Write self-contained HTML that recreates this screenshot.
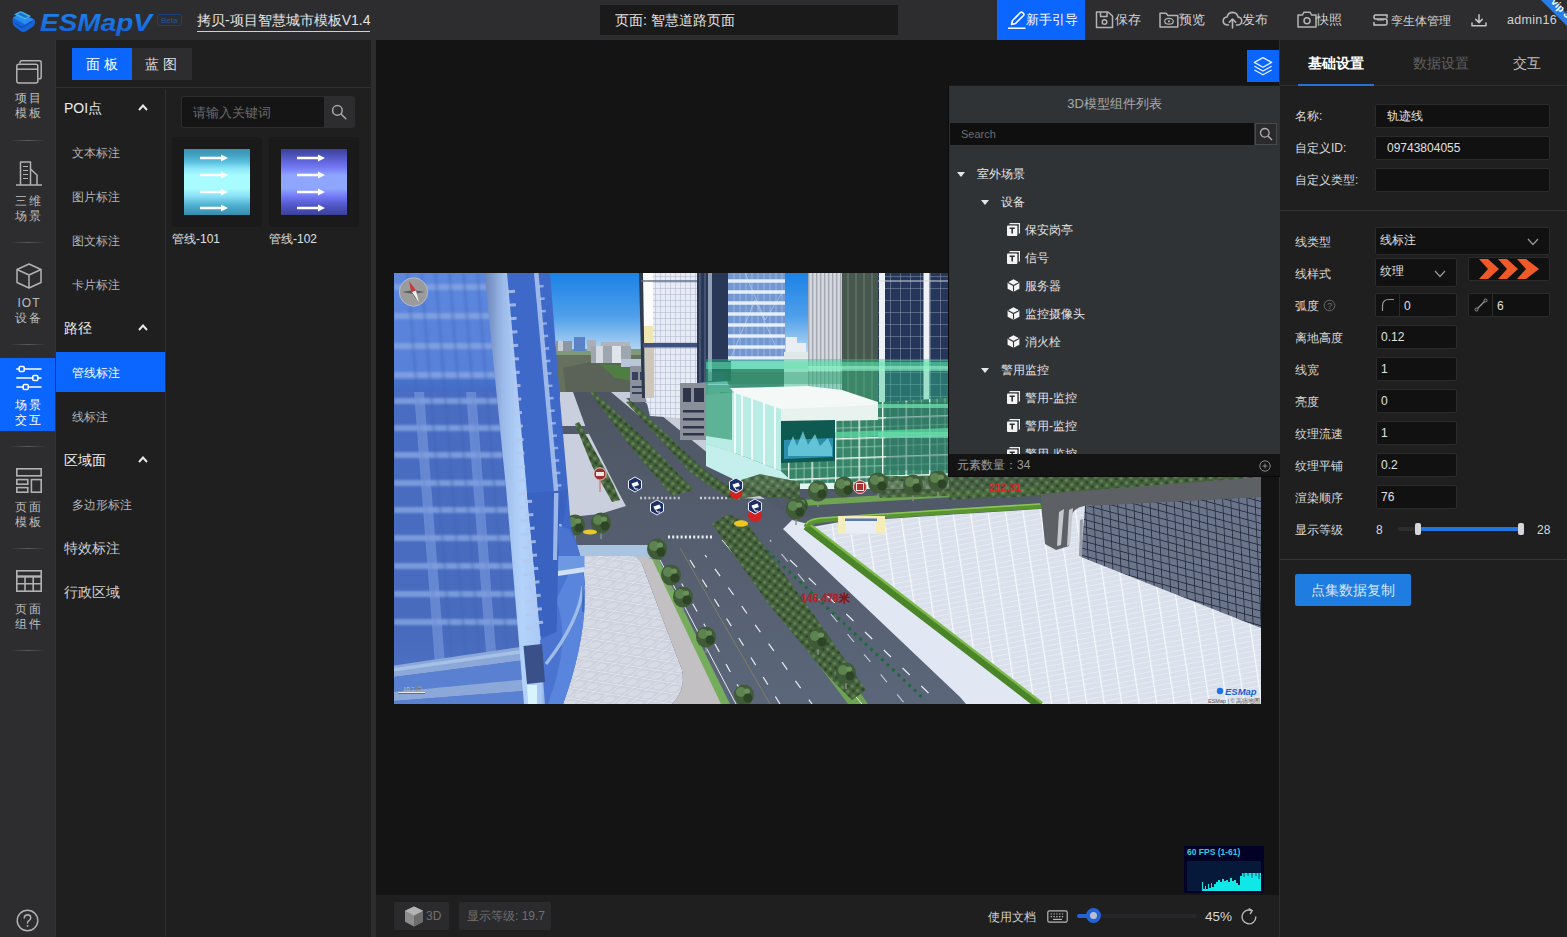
<!DOCTYPE html>
<html lang="zh">
<head>
<meta charset="utf-8">
<title>ESMapV</title>
<style>
*{box-sizing:border-box;margin:0;padding:0}
html,body{width:1567px;height:937px;overflow:hidden;background:#141414}
body{position:relative;font-family:"Liberation Sans",sans-serif;font-size:12px;color:#ccc;line-height:1}
.abs{position:absolute}
.t{position:absolute;white-space:nowrap;line-height:1}
svg{position:absolute;display:block;overflow:visible}
/* top bar */
#top{position:absolute;left:0;top:0;width:1567px;height:40px;background:#2d2d30}
#top .mi{position:absolute;top:14px;font-size:12.5px;color:#d2d2d2;white-space:nowrap}
/* left icon bar */
#ibar{position:absolute;left:0;top:40px;width:56px;height:897px;background:#2d2d30;border-right:1px solid #333}
#ibar .lb{position:absolute;left:0;width:56px;text-align:center;font-size:12px;color:#bdbdbd;letter-spacing:2px;padding-left:2px;line-height:15px}
#ibar .dv{position:absolute;left:10px;width:36px;height:1px;background:linear-gradient(90deg,rgba(90,90,90,0),#5a5a5a 50%,rgba(90,90,90,0))}
/* list panel */
#panel{position:absolute;left:56px;top:40px;width:315px;height:897px;background:#1f1f1f}
#split{position:absolute;left:371px;top:40px;width:5px;height:897px;background:#2d2d30}
.cat{position:absolute;left:8px;font-size:14px;color:#ececec}
.sub{position:absolute;left:16px;font-size:12px;color:#b4b4b4}
/* right panel */
#right{position:absolute;left:1279px;top:40px;width:288px;height:897px;background:#1f1f1f;border-left:1px solid #2e2e2e}
#right .l{position:absolute;left:15px;font-size:12px;color:#d8d8d8;white-space:nowrap}
#right .in{position:absolute;background:#111;border:1px solid #2b2b2b;border-radius:2px;color:#e0e0e0;font-size:12px;padding-left:4px;white-space:nowrap}
/* tree panel */
#tree{position:absolute;left:948px;top:85px;width:332px;height:392px;background:#303336;border-left:1px solid #0a0a0a;border-bottom:1px solid #0a0a0a;border-top:1px solid #1a1a1a;overflow:hidden}
#tree .r{position:absolute;font-size:12px;color:#e2e2e2;white-space:nowrap}
</style>
</head>
<body>

<!-- ================= CANVAS AREA ================= -->
<div id="canvas" class="abs" style="left:376px;top:40px;width:903px;height:897px;background:#141414"></div>
<svg id="scene" style="left:394px;top:273px;overflow:hidden" width="867" height="431" viewBox="394 273 867 431">
<defs>
  <linearGradient id="sky" x1="0" y1="273" x2="0" y2="352" gradientUnits="userSpaceOnUse">
    <stop offset="0" stop-color="#1b82e6"/><stop offset=".55" stop-color="#4f9fea"/><stop offset="1" stop-color="#b9d9f3"/>
  </linearGradient>
  <linearGradient id="bface" x1="0" y1="273" x2="0" y2="704" gradientUnits="userSpaceOnUse">
    <stop offset="0" stop-color="#5d88de"/><stop offset=".23" stop-color="#5881da"/><stop offset=".28" stop-color="#496dc2"/><stop offset=".85" stop-color="#486bbe"/><stop offset="1" stop-color="#5377c8"/>
  </linearGradient>
  <linearGradient id="bcol" x1="0" y1="0" x2="1" y2="0">
    <stop offset="0" stop-color="#6a84b8"/><stop offset=".3" stop-color="#9dbbea"/><stop offset=".6" stop-color="#b4d3fb"/><stop offset=".9" stop-color="#a9c8f4"/><stop offset="1" stop-color="#7f9fd8"/>
  </linearGradient>
  <linearGradient id="glass2" x1="0" y1="273" x2="0" y2="360" gradientUnits="userSpaceOnUse">
    <stop offset="0" stop-color="#4a7fc4"/><stop offset=".5" stop-color="#86b4e2"/><stop offset="1" stop-color="#a7c8ea"/>
  </linearGradient>
  <linearGradient id="road" x1="0" y1="392" x2="0" y2="704" gradientUnits="userSpaceOnUse"><stop offset="0" stop-color="#4d5562"/><stop offset=".4" stop-color="#545d6d"/><stop offset="1" stop-color="#5b667a"/></linearGradient>
  <pattern id="pgrid" width="17" height="5" patternUnits="userSpaceOnUse" patternTransform="matrix(1 -.2 .15 1 0 0)">
    <rect width="17" height="5" fill="#dbe1ec"/><path d="M0 0H17" stroke="#eef2f8" stroke-width="1.1"/><path d="M0 0V5" stroke="#f7f9fd" stroke-width="2.4"/>
  </pattern>
  <pattern id="pgridL" width="14" height="14" patternUnits="userSpaceOnUse" patternTransform="matrix(1 .16 .8 -.62 0 0)">
    <rect width="14" height="14" fill="#cdd2de"/><circle cx="7" cy="7" r="4.5" fill="#d6dbe6"/><path d="M0 0H14M0 0V14" stroke="#e6eaf2" stroke-width="1.3"/>
  </pattern>
  <pattern id="dtile" width="8.2" height="7.4" patternUnits="userSpaceOnUse" patternTransform="matrix(1 .27 .05 1 0 0)">
    <rect width="8.2" height="7.4" fill="#6a748a"/><path d="M0 0H8.2M0 0V7.4" stroke="#262c3c" stroke-width="1.7"/>
  </pattern>
  <pattern id="wgrid" width="5" height="6" patternUnits="userSpaceOnUse">
    <rect width="5" height="6" fill="#e6ebf5"/><path d="M0 0H5M0 0V6" stroke="#aab6cb" stroke-width="1"/>
  </pattern>
  <pattern id="ngrid" width="10" height="12" patternUnits="userSpaceOnUse">
    <rect width="10" height="12" fill="#26365a"/><path d="M0 0H10M0 0V12" stroke="#93a1b8" stroke-width=".9"/>
  </pattern>
  <pattern id="ggrid" width="23.5" height="19.5" patternUnits="userSpaceOnUse" patternTransform="matrix(1 -.035 0 1 788 401)">
    <rect width="23.5" height="19.5" fill="#388469"/><path d="M0 9.5H23.5M8 0V19.5M16 0V19.5" stroke="#9fd8c0" stroke-width=".7"/><path d="M0 0H23.5M0 0V19.5" stroke="#e9f7f1" stroke-width="2.8"/>
  </pattern>
  <pattern id="vstripe" width="4" height="4" patternUnits="userSpaceOnUse">
    <rect width="4" height="4" fill="#d3d6dc"/><rect width="1.4" height="4" fill="#a4a9b3"/>
  </pattern>
  <pattern id="trees" width="7" height="7" patternUnits="userSpaceOnUse" patternTransform="rotate(38)">
    <rect width="7" height="7" fill="#44603c"/><circle cx="2" cy="2" r="1.7" fill="#5f8652"/><circle cx="5.5" cy="5" r="1.5" fill="#2f4529"/>
  </pattern>
  <filter id="b1" x="-5%" y="-5%" width="110%" height="110%"><feGaussianBlur stdDeviation=".9"/></filter>
  <g id="tree"><rect x="-.7" y="-2" width="1.4" height="7" fill="#8a8f86"/><ellipse cx="0" cy="-11" rx="10" ry="10.5" fill="#405b38"/><ellipse cx="-3" cy="-14" rx="5" ry="5" fill="#5d8350"/><ellipse cx="4" cy="-8" rx="4.5" ry="4.5" fill="#2d4427"/><ellipse cx="3" cy="-15" rx="3" ry="2.6" fill="#6a9059"/></g>
  <g id="cam"><path d="M0 -8 L6.5 -4.3 V3.3 L0 7 L-6.5 3.3 V-4.3Z" fill="#1b2f66" stroke="#e9eefc" stroke-width="1"/><path d="M-3.5 -1.5 L2.5 -3.5 L4 0 L-2 2Z" fill="#fff"/><path d="M-1 2 L0 4 H3" stroke="#fff" stroke-width="1" fill="none"/></g>
</defs>

<!-- sky -->
<rect x="394" y="273" width="867" height="431" fill="url(#sky)"/>
<!-- far land -->
<rect x="548" y="349" width="100" height="48" fill="#66705f"/>
<rect x="548" y="349" width="100" height="6" fill="#7f9a7a"/>
<path d="M563 368 L600 360 L640 365 L640 392 L566 392Z" fill="#5b6358"/>
<path d="M600 364 L640 366 V382 L615 378Z" fill="#4f7d42"/>
<!-- distant buildings -->
<rect x="556" y="341" width="16" height="10" fill="#8e97a1"/><rect x="558" y="341" width="5" height="10" fill="#c6ccd3"/>
<rect x="574" y="337" width="11" height="14" fill="#5b82c4"/>
<rect x="587" y="340" width="9" height="11" fill="#a8afb8"/>
<rect x="601" y="342" width="29" height="7" fill="#aeb5be"/>
<rect x="591" y="346" width="40" height="17" fill="#9ea6b0"/><rect x="596" y="346" width="7" height="17" fill="#d5dae0"/><rect x="612" y="346" width="9" height="17" fill="#dfe4ea"/>
<rect x="621" y="359" width="20" height="8" fill="#b9c6d8"/>

<!-- ground base = road colour -->
<path d="M560 392 H1261 V704 H560Z" fill="url(#road)"/>
<!-- far pavements (upper right of avenue) -->
<path d="M611 392 H720 V440 L790 500 L740 498 L700 470 L650 425Z" fill="#c6ccd9"/>
<!-- service road -->
<path d="M626 398 L640 398 L736 476 L770 492 L735 492 L700 468Z" fill="#515a69"/>
<!-- left pavement beside blue tower -->
<path d="M560 392 L573 392 L586 428 L620 495 L626 506 L600 514 L560 518Z" fill="#c9cfdc"/>
<path d="M560 426 L586 426 L589 434 L560 434Z" fill="#515a69"/>
<!-- plaza top light band -->
<path d="M572 545 L648 545 L654 558 L578 558Z" fill="#a9c4e0"/>
<!-- left plaza -->
<path d="M576 556 L632 556 Q639 557 642 564 L682 670 Q686 690 672 704 L560 704 L560 560Z" fill="url(#pgridL)"/>
<!-- beige sidewalk -->
<path d="M636 556 L654 559 L722 704 L672 704 Q686 690 682 670 L642 564Z" fill="#c2c0c2"/>
<!-- grass strip -->
<path d="M652 559 L658 558 L730 704 L721 704Z" fill="#76ad5c"/>
<!-- median grass -->
<path d="M715 527 L741 523 L868 704 L848 704Z" fill="#6ea254"/>
<!-- right light sidewalk -->
<path d="M783 529 L792 520 L808 524 L1040 704 L966 704 L960 697Z" fill="#e1e8f3"/>
<!-- far side of cross street: pavement + grass -->
<path d="M720 470 L800 486 L949 478 L1261 470 V500 L1040 506 L840 519 L790 515 L760 496Z" fill="#515a69"/>
<path d="M800 500 L1040 486 L1040 492 L800 506Z" fill="#6fa552"/>
<!-- right plaza -->
<path d="M812 527 L840 522 L960 514 L1040 509 L1090 505 L1261 560 V704 H1040Z" fill="url(#pgrid)"/>
<!-- hedge -->
<path d="M806 526 L1040 706" stroke="#4a8629" stroke-width="8" fill="none"/>
<path d="M808 523 L1042 703" stroke="#7cb84a" stroke-width="2.5" fill="none"/>
<path d="M806 527 Q808 521 822 520 L960 511 L1040 506 L1078 503" stroke="#5a962f" stroke-width="5" fill="none"/>
<path d="M806 524 Q809 519 822 518 L960 509 L1040 504" stroke="#8cc458" stroke-width="1.6" fill="none"/>

<!-- road markings -->
<g stroke="#e8ebef" stroke-width="1.2" fill="none">
  <path d="M690 560 L780 704" stroke-dasharray="9 14"/>
  <path d="M705 555 L812 704" stroke-dasharray="9 14" stroke-dashoffset="6"/>
  <path d="M672 566 L748 704" stroke-dasharray="9 14" stroke-dashoffset="3"/>
  <path d="M722 540 L862 704" stroke-width="1"/>
  <path d="M660 560 L736 704" stroke-width="1"/>
  <path d="M790 560 L940 704" stroke-dasharray="10 16"/>
  <path d="M770 540 L905 704" stroke-dasharray="10 16" stroke-dashoffset="8" opacity=".7"/>
  <path d="M668 537 H712" stroke-width="3" stroke-dasharray="2 2.2"/>
  <path d="M700 498 H740" stroke-width="2.5" stroke-dasharray="2 2.2" opacity=".8"/>
  <path d="M640 498 H682" stroke-width="2.5" stroke-dasharray="2 2.2" opacity=".7"/>
</g>
<path d="M745 530 L925 700" stroke="#1e6b3a" stroke-width="3" stroke-dasharray="3 4.5" fill="none"/>
<path d="M680 548 L770 704" stroke="#8f8a55" stroke-width="1" fill="none" opacity=".7"/>

<!-- grey buildings + towers -->
<rect x="630" y="366" width="19" height="36" fill="#8c929d"/>
<g fill="#39415a"><rect x="632" y="372" width="6" height="8"/><rect x="640" y="372" width="6" height="8"/><rect x="632" y="386" width="14" height="2"/><rect x="632" y="392" width="14" height="2"/></g>
<!-- white tower 1 -->
<path d="M641 273 H697 V402 L680 418 L650 416 L645 395Z" fill="url(#wgrid)"/>
<path d="M643 273 H653 V326 H643Z" fill="#fcfcfc"/><path d="M643 326 H653 V344 H643Z" fill="#efe6b4"/><path d="M644 347 H654 V398 H645Z" fill="#cfc6ba"/>
<path d="M639 273 H643 L645 398 H642Z" fill="#2f3a4f"/>
<rect x="643" y="343" width="54" height="4.5" fill="#3f5180"/>
<rect x="641" y="280" width="56" height="2" fill="#5b6a86" opacity=".7"/>
<!-- dark tower 2 -->
<path d="M697 273 H731 V381 L697 383Z" fill="#2a3858"/><rect x="708" y="273" width="4" height="108" fill="#93a1b8"/>
<g stroke="#8f9db6" stroke-width=".7" opacity=".8"><path d="M700 273V382M705 273V382M710 273V381"/></g>
<rect x="728" y="273" width="57" height="88" fill="#7397d0"/><path d="M728 281H785M728 292H785M728 303H785M728 314H785M728 325H785M728 336H785M728 347H785M728 358H785" stroke="#e4edf9" stroke-width="3.4"/>
<g stroke="#eaf3fb" stroke-width=".8" opacity=".75" fill="none">
  
  <path d="M734 273V360M740 273V360M746 273V360M752 273V360M758 273V360M764 273V360M770 273V360M776 273V360M782 273V360" opacity=".55"/>
  <path d="M730 360 L755 300 L775 345 M745 273 L765 320 L784 290" opacity=".7"/>
</g>
<!-- grey building B -->
<rect x="680" y="383" width="28" height="57" fill="#8a8f9a"/>
<g fill="#2e354a"><rect x="683" y="388" width="8" height="14"/><rect x="694" y="388" width="10" height="14"/><rect x="683" y="410" width="21" height="2.5"/><rect x="683" y="418" width="21" height="2.5"/><rect x="683" y="426" width="21" height="2.5"/><rect x="683" y="433" width="21" height="2.5"/></g>
<!-- far white building in the gap -->
<path d="M786 337 H797 V343 H806 V392 H786Z" fill="#e9eef2"/>
<rect x="784" y="352" width="24" height="40" fill="#dfe9ea"/>
<!-- tower 3 -->
<rect x="808" y="273" width="35" height="120" fill="url(#vstripe)"/>
<rect x="842" y="273" width="37" height="131" fill="#46574d"/>
<path d="M848 273V400M856 273V400M864 273V402M872 273V403" stroke="#7b8a80" stroke-width=".8"/>
<rect x="878" y="273" width="71" height="204" fill="url(#ngrid)"/>
<path d="M882 273V477M926.5 273V477" stroke="#eef2f7" stroke-width="6"/>
<path d="M878 281H949" stroke="#cfd6e0" stroke-width="1.2"/>
<!-- green overlay -->
<path d="M706 359 H949 V487 L790 487 L706 456Z" fill="#2fc68c" opacity=".42"/>
<rect x="706" y="362" width="243" height="7" fill="#63e6ae" opacity=".5"/>
<rect x="706" y="372" width="140" height="12" fill="#2a8f68" opacity=".35"/><path d="M722 369 H784 V388 H730Z" fill="#267a58" opacity=".7"/>
<rect x="808" y="366" width="141" height="5" fill="#9af5cf" opacity=".55"/>
<!-- podium -->
<path d="M781 408 L949 398 V487 L781 471Z" fill="url(#ggrid)"/>
<path d="M886 402 H949 V477 H886Z" fill="#2b7263" opacity=".5"/>
<path d="M878 432 H949 V438 H878Z M878 404 H949 V408 H878Z" fill="#6fe3ae" opacity=".7"/>
<path d="M781 434 L949 428 V434 L781 440Z" fill="#5fe0a6" opacity=".7"/>
<path d="M706 395 L735 392 L781 408 V471 L735 453 L706 444Z" fill="#b9ece4"/>
<path d="M706 385 L732 385 L732 440 L706 436Z" fill="#47a582" opacity=".8"/>
<g stroke="#f3fbfa" stroke-width="2"><path d="M735 392V453M742 395V456M752 398V460M764 402V465M775 406V469"/></g>
<path d="M781 408 L878 404 V420 L781 422Z" fill="#e8f2ef"/>
<path d="M730 388 L808 386 L842 390 L878 402 V405 L781 409 L735 393Z" fill="#f4f9f8"/>
<path d="M781 421 L835 420 V461 L781 463Z" fill="#0e5a50"/>
<path d="M784 440 L833 438 V457 L784 459Z" fill="#2d8fae"/>
<path d="M788 448 L793 436 L797 446 L803 431 L808 445 L815 434 L820 446 L828 438 L832 448 V456 H788Z" fill="#6fd0e0" opacity=".8"/>
<!-- cyan ground in front of podium -->
<path d="M706 444 L735 453 L781 471 L800 487 L760 492 L706 466Z" fill="#c5efec"/>
<path d="M781 471 L949 470 V489 L800 489Z" fill="url(#ggrid)"/><path d="M781 484 L949 480 V489 H800Z" fill="#dff5f1"/>

<!-- avenue medians (trees) far part -->
<path d="M590 392 L594 392 L646 440 L694 490 L672 496 L630 446Z" fill="url(#trees)"/>
<path d="M626 402 L631 401 L700 466 L738 494 L728 498 L690 472Z" fill="url(#trees)"/>
<path d="M575 424 L579 422 L612 482 L620 500 L612 502 L592 466Z" fill="url(#trees)"/>
<!-- main median trees -->
<path d="M712 524 L728 514 L746 522 L812 612 L866 690 L852 700 L828 676 L770 606Z" fill="url(#trees)"/>
<!-- trees along cross street -->
<path d="M722 486 L760 474 L800 482 L800 500 L760 496 L730 500Z" fill="url(#trees)" opacity=".9"/>
<path d="M949 477 H1045 L1040 496 L949 500Z" fill="url(#trees)" opacity=".85"/>
<path d="M870 476 H949 V496 L880 498Z" fill="url(#trees)" opacity=".8"/>
<use href="#tree" x="575" y="536"/><use href="#tree" x="601" y="534"/><use href="#tree" x="657" y="560"/><use href="#tree" x="671" y="586"/><use href="#tree" x="683" y="608"/><use href="#tree" x="706" y="648"/><use href="#tree" x="744" y="706"/>
<use href="#tree" x="800" y="514" transform="translate(160 103) scale(.8)"/><use href="#tree" x="796" y="520"/><use href="#tree" x="818" y="502"/><use href="#tree" x="844" y="498"/><use href="#tree" x="878" y="494"/><use href="#tree" x="913" y="496"/><use href="#tree" x="938" y="492"/>
<use href="#tree" x="846" y="684"/><use href="#tree" x="818" y="650"/>
<!-- guard house -->
<rect x="838" y="516" width="47" height="18" fill="#f3edb9"/>
<rect x="846" y="520" width="30" height="13" fill="#e9eef6"/><rect x="845" y="518.5" width="32" height="2.5" fill="#5679b6"/>
<!-- cars -->
<ellipse cx="741" cy="523.5" rx="7" ry="3.2" fill="#f0c51d"/>
<ellipse cx="590" cy="532" rx="7" ry="2.6" fill="#e9c82a"/>
<!-- markers -->
<circle cx="600" cy="474" r="6.2" fill="#9b2f2f" stroke="#e8d5d5" stroke-width="1"/><rect x="596" y="472" width="8" height="4" fill="#f1e4e4"/><path d="M600 480V492" stroke="#c66" stroke-width="1"/>
<circle cx="860" cy="487" r="6.5" fill="#a83232" stroke="#e9caca" stroke-width="1"/><rect x="856.5" y="483.5" width="7" height="7" fill="none" stroke="#f4e6e6" stroke-width="1"/>
<path d="M729 492 Q736 505 743 492 Q736 499 729 492Z" fill="#e11919"/><circle cx="736" cy="493" r="6" fill="#e01b1b" opacity=".85"/>
<circle cx="755" cy="515" r="7" fill="#e01b1b" opacity=".9"/>
<use href="#cam" x="635" y="485"/><use href="#cam" x="657" y="508"/><use href="#cam" x="736" y="486"/><use href="#cam" x="755" y="507"/>
<!-- red labels -->
<text x="801" y="602" font-family="Liberation Sans" font-weight="bold" font-size="10.5" fill="#d8262c" stroke="#7a1a1a" stroke-width=".3">146.478米</text>
<text x="989" y="491" font-family="Liberation Sans" font-weight="bold" font-size="10.5" fill="#d8262c">212.31</text>

<!-- dark building right + canopy -->
<path d="M1036 476 H1261 V480 L1040 497Z" fill="url(#trees)"/>
<path d="M1085 506 L1261 497 V628 L1081 557Z" fill="url(#dtile)"/>
<path d="M1080 520 L1083 519 L1082 557 L1079 556Z" fill="#9a9ea8"/>
<path d="M1041 494 L1261 477 V497 L1084 506 Q1072 508 1070 520 L1069 546 L1056 550 L1045 544 L1041 504Z" fill="#5d6065"/>
<path d="M1059 512 L1064 509 L1061 545 L1057 546Z M1069 510 L1073 508 L1070 545 L1067 546Z" fill="#c5c8cc"/>

<!-- BLUE TOWER (left) -->
<path d="M394 273 H550 L560 400 L568 490 L571 528 Q585 560 584 600 Q582 650 563 704 H394Z" fill="#3f69c8"/>
<path d="M394 273 H486 L507 493 L527 704 H394Z" fill="url(#bface)"/>
<!-- light horizontal bands on main face -->
<g stroke="#86a6e2" stroke-width="6" opacity=".8" fill="none" filter="url(#b1)">
  <path d="M394 287H487M394 316H490M394 346H493M394 375H496M394 401H498M394 428H501M394 455H503M394 483H506M394 510H509M394 538H511M394 566H514M394 594H517M394 622H519"/>
</g>
<g stroke="#3f62b4" stroke-width="3" opacity=".35" fill="none" transform="skewX(4.5) translate(-22 0)" filter="url(#b1)">
  <path d="M408 273V704M422 273V704M436 273V704M450 273V704M464 273V704M478 273V704M492 340V704M506 480V704"/>
</g>
<path d="M414 392 H424 L448 704 H438Z M466 392 H476 L500 704 H490Z" fill="#7f9fe0" opacity=".55"/>
<path d="M394 380 H496 V392 H394Z" fill="#3d69c6" opacity=".5"/>
<!-- bottom lighter parapet -->
<path d="M394 665.5 L524 646.5 L526 660 L394 677Z" fill="#8ba8d8"/>
<path d="M394 668 L524.5 649.5 L525 653 L394 671.5Z" fill="#a6c1e8"/>
<path d="M394 677 L526 660 L528 679 L394 692Z" fill="#5a80d2"/>
<path d="M394 692 L528 679 L529 690.5 L394 701Z" fill="#8ba8d8"/>
<path d="M394 701 L529 690.5 L530 704 H394Z" fill="#5a80d2"/>
<!-- column -->
<path d="M484.5 273 H507 L527 493 L547 704 H524 L506.5 493Z" fill="url(#bcol)"/>
<!-- right face details -->
<path d="M534 273 H538.5 L558.5 493 L565 560 H560 L554 493Z" fill="#a6c0ec" opacity=".9"/>
<path d="M511 290 L531 640" stroke="#b4c8ee" stroke-width="8" stroke-dasharray="3 10.5" fill="none" opacity=".8"/>
<path d="M541 285 L562 520" stroke="#b4c8ee" stroke-width="5" stroke-dasharray="2.5 10" fill="none" opacity=".7"/>
<!-- podium curve pieces -->
<path d="M559 526 L569 529 Q587 560 585 600 Q583 650 563 704 H545 L540 640 L556 632Z" fill="#4a74d0"/>
<path d="M556 600 Q572 640 548 704 H563 Q583 650 585 600 Q586 575 578 556 Z" fill="#5a85dc"/>
<path d="M558 556 H584.5 V569 L558 573Z" fill="#6d99e2"/><path d="M558 571 L584.5 567 V572 L558 576Z" fill="#cfe0f7"/>
<path d="M583 586 Q580 620 546 664" stroke="#9dbde8" stroke-width="3.2" fill="none"/>
<path d="M583 586 V612" stroke="#2f56ad" stroke-width="1.2" fill="none"/>
<!-- right face lower end + column cap -->
<path d="M527 493 L568 490 L563 524 L559 524 L556.5 632 L544.5 636 L540.5 636Z" fill="#3a62c0"/>
<path d="M554 493 L558.5 493 L557 560 H553Z" fill="#a6c0ec" opacity=".9"/>
<path d="M528 500 L540 632" stroke="#b4c8ee" stroke-width="8" stroke-dasharray="3 10.5" fill="none" opacity=".8"/>
<path d="M523.5 646 L542 644 L545 682 L527 684Z" fill="#3a5088"/>
<path d="M527 685 H537 V704 H528Z" fill="#d8f4fb"/>
<!-- compass -->
<circle cx="413.5" cy="292" r="14.2" fill="#9b9b9b"/><circle cx="413.5" cy="292" r="14.2" fill="none" stroke="#b9c4d8" stroke-width=".8"/>
<path d="M402 292 L413.5 290 L425 292 L413.5 294Z" fill="#5c5c5c"/>
<path d="M409 281 L416.5 291 L411.5 293Z" fill="#c8383c"/><path d="M412 292 L416 290.5 L419 303Z" fill="#f2f2f2"/><path d="M412 292 L419 303 L414 296Z" fill="#3a3a3a"/>
<!-- scale bar -->
<text x="403" y="691" font-family="Liberation Sans" font-size="6" fill="#fff" stroke="#445" stroke-width=".2">10.7 米</text>
<path d="M398 692.5 H425" stroke="#e8e8e8" stroke-width="1"/><path d="M398 693.5 H425" stroke="#444" stroke-width=".6"/>
<!-- esmap logo -->
<circle cx="1220" cy="691" r="3.2" fill="#1a74e8"/>
<text x="1225" y="695" font-family="Liberation Sans" font-weight="bold" font-style="italic" font-size="9.5" fill="#1b5fd0">ESMap</text>
<text x="1208" y="702.5" font-family="Liberation Sans" font-size="5.5" fill="#555">ESMap | © 高德地图</text>
</svg>


<!-- ================= TOP BAR ================= -->
<div id="top">
  <svg style="left:10px;top:6px" width="180" height="30" viewBox="10 6 180 30">
    <defs><linearGradient id="lg1" x1="0" y1="0" x2="1" y2="1"><stop offset="0" stop-color="#36a3ff"/><stop offset="1" stop-color="#0b55d8"/></linearGradient>
    <linearGradient id="lg2" x1="0" y1="0" x2="0" y2="1"><stop offset="0" stop-color="#1e86ee"/><stop offset="1" stop-color="#1560d4"/></linearGradient></defs>
    <g>
      <path d="M12.5 20 Q12 17.5 15 16.5 L22 14 L33 18.5 Q35.5 20 35 23 Q34.5 26 31 28 L25.5 31.5 Q23 32.5 20.5 31 L14.5 26.5 Q12.5 24.5 12.5 20Z" fill="#1565d8"/>
      <path d="M13 17.5 L21 13.5 L33.5 19.5 L25 24.5Z" fill="#2a8cf2"/>
      <path d="M14 14.5 L19.5 11.5 Q21 11 22.5 11.8 L31 16 L25 19.5 L14 14.5Z" fill="#43b4e6"/>
      <path d="M17.5 14.2 L20.5 12.6 L28.5 16.4 L25.3 18Z" fill="#1b6fd6"/>
      <path d="M15 23 L22 27.5 L32 21.5" stroke="#0f4fb8" stroke-width="1.3" fill="none"/>
    </g>
    <text x="40" y="31" font-family="Liberation Sans" font-weight="bold" font-style="italic" font-size="24" textLength="112" lengthAdjust="spacingAndGlyphs" fill="url(#lg2)">ESMapV</text>
    <rect x="157.5" y="14.5" width="24" height="11" rx="1.5" fill="none" stroke="#1b3f7c" stroke-width="1"/>
    <text x="161" y="23" font-family="Liberation Sans" font-size="8" fill="#2355a6">Beta</text>
  </svg>

  <div class="t" style="left:197px;top:13px;font-size:14px;color:#e4e4e4;padding-bottom:4px;border-bottom:1px solid #d0d0d0">拷贝-项目智慧城市模板V1.4</div>
  <div class="abs" style="left:600px;top:5px;width:298px;height:30px;background:#1a1a1a"></div>
  <div class="t" style="left:615px;top:13px;font-size:14px;color:#e0e0e0">页面: 智慧道路页面</div>
  <div class="abs" style="left:997px;top:0;width:88px;height:40px;background:#0a66ff"></div>
  <div class="mi" style="left:1026px;color:#fff">新手引导</div>
  <div class="mi" style="left:1115px">保存</div>
  <div class="mi" style="left:1179px">预览</div>
  <div class="mi" style="left:1242px">发布</div>
  <div class="mi" style="left:1316px">快照</div>
  <div class="mi" style="left:1391px;font-size:12px;top:15px">孪生体管理</div>
  <div class="mi" style="left:1507px;letter-spacing:.3px">admin16</div>
  <!-- pencil -->
  <svg style="left:1007px;top:10px" width="20" height="20" viewBox="0 0 20 20" fill="none" stroke="#fff" stroke-width="1.6" stroke-linejoin="round"><path d="M4.5 14.5 L5.5 10.5 L13.5 2.5 Q14.5 1.6 15.5 2.5 L16.5 3.5 Q17.4 4.5 16.5 5.5 L8.5 13.5Z"/><path d="M1 18.2 H18.5" stroke-width="1.5"/></svg>
  <!-- save -->
  <svg style="left:1095px;top:11px" width="19" height="18" viewBox="0 0 19 18" fill="none" stroke="#b4b4b4" stroke-width="1.5" stroke-linejoin="round"><path d="M1.5 1 H13 L17.5 5 V16.5 H1.5Z"/><path d="M5.5 1.2 V5.5 H12 V1.2"/><circle cx="9.5" cy="11" r="2.3"/></svg>
  <!-- preview -->
  <svg style="left:1159px;top:12px" width="20" height="16" viewBox="0 0 20 16" fill="none" stroke="#b4b4b4" stroke-width="1.5" stroke-linejoin="round"><path d="M1 1.2 H7 L9 3.5 H18.8 V15 H1Z"/><ellipse cx="10" cy="9.3" rx="4.3" ry="2.9" stroke-width="1.2"/><circle cx="10" cy="9.3" r="1.1" fill="#b4b4b4" stroke="none"/></svg>
  <!-- cloud upload -->
  <svg style="left:1222px;top:11px" width="21" height="18" viewBox="0 0 21 18" fill="none" stroke="#b4b4b4" stroke-width="1.6" stroke-linecap="round" stroke-linejoin="round"><path d="M6.5 14 H5.2 Q1.2 13.6 1.2 9.8 Q1.4 6.4 5 6 Q6.2 1.4 10.8 1.4 Q15 1.6 16 6 Q19.8 6.6 19.8 10 Q19.6 13.6 16 14 H14.5"/><path d="M10.5 17 V8.5 M7.3 11.2 L10.5 8 L13.7 11.2"/></svg>
  <!-- camera -->
  <svg style="left:1297px;top:11px" width="20" height="17" viewBox="0 0 20 17" fill="none" stroke="#b4b4b4" stroke-width="1.5" stroke-linejoin="round"><path d="M1 4 H5.5 L7 1.2 H13 L14.5 4 H19 V16 H1Z"/><circle cx="10" cy="9.7" r="3"/></svg>
  <!-- twin -->
  <svg style="left:1373px;top:14px" width="15" height="12" viewBox="0 0 15 12" fill="none" stroke="#c4c4c4" stroke-width="1.5" stroke-linecap="round"><path d="M14 3.4 V1 H2.6 Q1 1 1 2.6 V3.4 Q1 5 2.6 5 H12.4 Q14 5 14 6.6 V9.4 Q14 11 12.4 11 H1 V8.6"/><path d="M4.5 6 H10.5" stroke-width="1.2"/></svg>
  <!-- download -->
  <svg style="left:1471px;top:14px" width="16" height="13" viewBox="0 0 16 13" fill="none" stroke="#c4c4c4" stroke-width="1.5" stroke-linecap="round" stroke-linejoin="round"><path d="M8 .8 V8.4 M4.8 5.4 L8 8.6 L11.2 5.4"/><path d="M1 9 V11.8 H15 V9"/></svg>
  <!-- vip ribbon -->
  <svg style="left:1537px;top:0" width="30" height="30" viewBox="0 0 30 30" overflow="hidden"><path d="M4 0 H16 L30 14 V26Z" fill="#2a7de4"/><text x="0" y="0" transform="translate(13.5 2.5) rotate(45)" font-family="Liberation Sans" font-weight="bold" font-size="10" fill="#fff">vip 3</text></svg>

</div>

<!-- ================= LEFT ICON BAR ================= -->
<div id="ibar">
  <div class="abs" style="left:0;top:318px;width:55px;height:73px;background:#0a66ff"></div>
  <div class="lb" style="top:51px">项目<br>模板</div>
  <div class="dv" style="top:100px"></div>
  <div class="lb" style="top:154px">三维<br>场景</div>
  <div class="dv" style="top:202px"></div>
  <div class="lb" style="top:256px;letter-spacing:1px">IOT<br><span style="letter-spacing:2px">设备</span></div>
  <div class="dv" style="top:304px"></div>
  <div class="lb" style="top:358px;color:#fff">场景<br>交互</div>
  <div class="dv" style="top:406px"></div>
  <div class="lb" style="top:460px">页面<br>模板</div>
  <div class="dv" style="top:508px"></div>
  <div class="lb" style="top:562px">页面<br>组件</div>
  <div class="dv" style="top:610px"></div>

  <!-- project template: stacked windows -->
  <svg style="left:16px;top:20px" width="26" height="24" viewBox="0 0 26 24" fill="none" stroke="#b2b2b2" stroke-width="1.5" stroke-linejoin="round"><path d="M4 3.5 V2.5 Q4 .8 5.8 .8 H23.4 Q25.2 .8 25.2 2.5 V17 Q25.2 18.8 23.4 18.8 H22.4"/><rect x=".8" y="4.2" width="21" height="18.8" rx="2"/><path d="M.8 9.2 H21.8"/></svg>
  <!-- building -->
  <svg style="left:16px;top:121px" width="26" height="25" viewBox="0 0 26 25" fill="none" stroke="#b2b2b2" stroke-width="1.5" stroke-linejoin="round"><path d="M0 24 H26"/><path d="M4.5 24 V1 H14.5 V24"/><path d="M14.5 8 L21 14 V24"/><path d="M7 5.5H12M7 9.5H12M7 13.5H12M7 17.5H12" stroke-width="1.2"/></svg>
  <!-- cube -->
  <svg style="left:16px;top:223px" width="26" height="26" viewBox="0 0 26 26" fill="none" stroke="#b2b2b2" stroke-width="1.5" stroke-linejoin="round"><path d="M13 1 L25 6.5 V19.5 L13 25 L1 19.5 V6.5Z"/><path d="M1 6.5 L13 12 L25 6.5 M13 12 V25"/></svg>
  <!-- sliders (active) -->
  <svg style="left:16px;top:325px" width="26" height="26" viewBox="0 0 26 26" fill="none" stroke="#fff" stroke-width="1.5" stroke-linecap="round"><path d="M0.8 4 H3 M8.4 4 H25"/><rect x="3.2" y="1.6" width="5" height="4.8" rx="1"/><path d="M0.8 13 H16.6 M22 13 H25"/><rect x="16.8" y="10.6" width="5" height="4.8" rx="1"/><path d="M0.8 22 H7 M12.4 22 H25"/><rect x="7.2" y="19.6" width="5" height="4.8" rx="1"/></svg>
  <!-- layout -->
  <svg style="left:16px;top:428px" width="26" height="25" viewBox="0 0 26 25" fill="none" stroke="#b2b2b2" stroke-width="1.6"><rect x=".8" y=".8" width="24.4" height="7"/><rect x=".8" y="11.6" width="11" height="4.6"/><rect x=".8" y="19.6" width="11" height="4.6"/><rect x="15.4" y="11.6" width="9.8" height="12.6"/></svg>
  <!-- table -->
  <svg style="left:16px;top:530px" width="26" height="22" viewBox="0 0 26 22" fill="none" stroke="#b2b2b2" stroke-width="1.6"><rect x=".8" y=".8" width="24.4" height="20.4"/><path d="M.8 6.5 H25.2" stroke-width="2.4"/><path d="M.8 13.8 H25.2 M9 6.5 V21 M17.2 6.5 V21"/></svg>
  <!-- help -->
  <svg style="left:16px;top:869px" width="23" height="23" viewBox="0 0 23 23" fill="none" stroke="#b2b2b2" stroke-width="1.4"><circle cx="11.5" cy="11.5" r="10.3"/><path d="M8.2 9 Q8.4 5.8 11.6 5.8 Q14.8 6 14.8 8.8 Q14.8 10.6 12.8 11.6 Q11.5 12.3 11.5 14" stroke-linecap="round"/><circle cx="11.5" cy="17" r=".9" fill="#b2b2b2" stroke="none"/></svg>

</div>

<!-- ================= LIST PANEL ================= -->
<div id="panel">
  <div class="abs" style="left:16px;top:8px;width:60px;height:32px;background:#0a66ff"></div>
  <div class="abs" style="left:76px;top:8px;width:60px;height:32px;background:#2d2d30"></div>
  <div class="t" style="left:30px;top:17px;font-size:14px;color:#fff;letter-spacing:4px">面板</div>
  <div class="t" style="left:89px;top:17px;font-size:14px;color:#e0e0e0;letter-spacing:4px">蓝图</div>
  <div class="abs" style="left:0;top:47px;width:315px;height:1px;background:#303030"></div>
  <div class="abs" style="left:109px;top:49px;width:1px;height:848px;background:#303030"></div>

  <div class="cat" style="top:61px">POI点</div>
  <div class="sub" style="top:107px">文本标注</div>
  <div class="sub" style="top:151px">图片标注</div>
  <div class="sub" style="top:195px">图文标注</div>
  <div class="sub" style="top:239px">卡片标注</div>
  <div class="cat" style="top:281px">路径</div>
  <div class="abs" style="left:0;top:312px;width:109px;height:40px;background:#0a66ff"></div>
  <div class="sub" style="top:327px;color:#fff">管线标注</div>
  <div class="sub" style="top:371px">线标注</div>
  <div class="cat" style="top:413px">区域面</div>
  <div class="sub" style="top:459px">多边形标注</div>
  <div class="cat" style="top:501px;color:#d0d0d0">特效标注</div>
  <div class="cat" style="top:545px;color:#d0d0d0">行政区域</div>

  <!-- search -->
  <div class="abs" style="left:125px;top:56px;width:143px;height:32px;background:#151515;border:1px solid #2c2c2c;border-right:0;border-radius:3px 0 0 3px"></div>
  <div class="abs" style="left:268px;top:56px;width:31px;height:32px;background:#2d2d30;border-radius:0 3px 3px 0"></div>
  <div class="t" style="left:137px;top:66px;font-size:13px;color:#6a6a6a">请输入关键词</div>

  <!-- cards -->
  <div class="abs" style="left:116px;top:97px;width:90px;height:90px;background:#1a1a1a;border-radius:4px"></div>
  <div class="abs" style="left:213px;top:97px;width:90px;height:90px;background:#1a1a1a;border-radius:4px"></div>
  <div class="t" style="left:116px;top:193px;font-size:12px;color:#e0e0e0">管线-101</div>
  <div class="t" style="left:213px;top:193px;font-size:12px;color:#e0e0e0">管线-102</div>
  <!-- carets -->
  <svg style="left:82px;top:64px" width="10" height="7" viewBox="0 0 10 7"><path d="M1 6 L5 1.6 L9 6" fill="none" stroke="#e8e8e8" stroke-width="2"/></svg>
  <svg style="left:82px;top:284px" width="10" height="7" viewBox="0 0 10 7"><path d="M1 6 L5 1.6 L9 6" fill="none" stroke="#e8e8e8" stroke-width="2"/></svg>
  <svg style="left:82px;top:416px" width="10" height="7" viewBox="0 0 10 7"><path d="M1 6 L5 1.6 L9 6" fill="none" stroke="#e8e8e8" stroke-width="2"/></svg>
  <!-- search icon -->
  <svg style="left:275px;top:64px" width="16" height="16" viewBox="0 0 16 16" fill="none" stroke="#a8a8a8" stroke-width="1.5"><circle cx="6.4" cy="6.4" r="4.8"/><path d="M10 10 L14.8 14.8" stroke-linecap="round"/></svg>
  <!-- card images -->
  <svg style="left:128px;top:109px" width="66" height="66" viewBox="0 0 66 66">
    <defs><linearGradient id="c1" x1="0" y1="0" x2="0" y2="1"><stop offset="0" stop-color="#3a90b0"/><stop offset=".1" stop-color="#44a2c2"/><stop offset=".2" stop-color="#5cc0de"/><stop offset=".3" stop-color="#8ee8fa"/><stop offset=".4" stop-color="#a8fbff"/><stop offset=".6" stop-color="#a8fbff"/><stop offset=".72" stop-color="#88def4"/><stop offset=".85" stop-color="#4fb0d0"/><stop offset="1" stop-color="#368cac"/></linearGradient></defs>
    <rect width="66" height="66" fill="url(#c1)"/>
    <g stroke="#fff" stroke-width="2.6" fill="#fff"><path d="M16 9 H38M16 26 H38M16 43 H38M16 59 H38" /><path d="M37 5.5 L44 9 L37 12.5Z M37 22.5 L44 26 L37 29.5Z M37 39.5 L44 43 L37 46.5Z M37 55.5 L44 59 L37 62.5Z" stroke="none"/></g>
  </svg>
  <svg style="left:225px;top:109px" width="66" height="66" viewBox="0 0 66 66">
    <defs><linearGradient id="c2" x1="0" y1="0" x2="0" y2="1"><stop offset="0" stop-color="#3a3f98"/><stop offset=".08" stop-color="#4a4fb4"/><stop offset=".18" stop-color="#5f64d8"/><stop offset=".28" stop-color="#7378f5"/><stop offset=".4" stop-color="#8fa6ff"/><stop offset=".6" stop-color="#8fa6ff"/><stop offset=".72" stop-color="#7378f5"/><stop offset=".85" stop-color="#5258c8"/><stop offset="1" stop-color="#3a4098"/></linearGradient></defs>
    <rect width="66" height="66" fill="url(#c2)"/>
    <g stroke="#fff" stroke-width="2.6" fill="#fff"><path d="M16 9 H38M16 26 H38M16 43 H38M16 59 H38" /><path d="M37 5.5 L44 9 L37 12.5Z M37 22.5 L44 26 L37 29.5Z M37 39.5 L44 43 L37 46.5Z M37 55.5 L44 59 L37 62.5Z" stroke="none"/></g>
  </svg>

</div>
<div id="split"></div>

<!-- ================= BOTTOM BAR ================= -->
<div class="abs" style="left:376px;top:895px;width:903px;height:42px;background:#1f1f1f"></div>
<div class="abs" style="left:394px;top:902px;width:55px;height:28px;background:#2b2b2d;border-radius:2px"></div>
<div class="t" style="left:426px;top:910px;font-size:12px;color:#707070">3D</div>
<div class="abs" style="left:459px;top:902px;width:92px;height:28px;background:#2b2b2d;border-radius:2px"></div>
<div class="t" style="left:467px;top:910px;font-size:12px;color:#707070">显示等级: 19.7</div>
<div class="t" style="left:988px;top:911px;font-size:12px;color:#d0d0d0">使用文档</div>
<div class="t" style="left:1205px;top:910px;font-size:13.5px;color:#d8d8d8">45%</div>
<!-- 3D cube icon -->
<svg style="left:404px;top:906px" width="20" height="21" viewBox="0 0 20 21"><path d="M10 .5 L19 4.8 V15.8 L10 20.5 L1 15.8 V4.8Z" fill="#8d8d8d"/><path d="M10 9.4 L19 4.8 V15.8 L10 20.5Z" fill="#6c6c6c"/><path d="M10 .5 L19 4.8 L10 9.4 L1 4.8Z" fill="#b3b3b3"/></svg>
<!-- keyboard -->
<svg style="left:1047px;top:910px" width="21" height="13" viewBox="0 0 21 13" fill="none" stroke="#b8b8b8" stroke-width="1.2"><rect x=".8" y=".8" width="19.4" height="11.4" rx="1.6"/><path d="M3.6 4 H17.4 M3.6 6.6 H17.4" stroke-dasharray="1.4 1.4"/><path d="M6 9.4 H15"/></svg>
<!-- slider -->
<div class="abs" style="left:1077px;top:914px;width:120px;height:4px;background:#252629;border-radius:2px"></div>
<div class="abs" style="left:1077px;top:914px;width:16px;height:4px;background:#2463d6;border-radius:2px"></div>
<div class="abs" style="left:1086px;top:908px;width:15px;height:15px;border-radius:8px;background:#b9bdd2;border:4px solid #2463d6"></div>
<!-- refresh -->
<svg style="left:1240px;top:908px" width="18" height="18" viewBox="0 0 18 18" fill="none" stroke="#b8b8b8" stroke-width="1.4" stroke-linecap="round"><path d="M15.8 9 A6.9 6.9 0 1 1 11.6 2.6"/><path d="M9.2 .8 L12.2 2.6 L10.4 5.6" stroke-linejoin="round"/></svg>
<!-- layers button -->
<div class="abs" style="left:1247px;top:50px;width:32px;height:32px;background:#0a66ff"></div>
<svg style="left:1253px;top:56px" width="20" height="20" viewBox="0 0 20 20" fill="none" stroke="#e8f0ff" stroke-width="1.3" stroke-linejoin="round"><path d="M10 1.6 L18.6 6.4 L10 11.2 L1.4 6.4Z"/><path d="M1.4 10.2 L10 15 L18.6 10.2"/><path d="M1.4 14 L10 18.8 L18.6 14"/></svg>
<!-- FPS stats -->
<div class="abs" style="left:1184px;top:846px;width:80px;height:47px;background:#020226"></div>
<div class="t" style="left:1187px;top:848px;font-size:8.5px;font-weight:bold;color:#3cc8e0">60 FPS (1-61)</div>
<div class="abs" style="left:1187px;top:861px;width:74px;height:30px;background:#07193a"></div>
<svg style="left:1187px;top:861px" width="74" height="30" viewBox="0 0 74 30"><path d="M15 30 V21 H16 V28 H18 V25 H19 V28 H21 V23 H22 V27 H24 V22 H25 V26 H27 V23 H29 V21 H31 V19 H33 V21 H35 V18 H37 V20 H39 V19 H41 V21 H43 V17 H45 V20 H47 V19 H49 V22 H51 V24 H53 V15 H55 V12 H74 V30Z" fill="#10e8e8"/><path d="M57 12V16M61 12V15M65 12V17M69 12V15M72 12V18" stroke="#07193a" stroke-width=".7"/></svg>


<!-- ================= RIGHT PANEL ================= -->
<div id="right">

  <!-- tabs -->
  <div class="t" style="left:28px;top:16px;font-size:14px;color:#fff;font-weight:bold">基础设置</div>
  <div class="t" style="left:133px;top:16px;font-size:14px;color:#5f5f5f">数据设置</div>
  <div class="t" style="left:233px;top:16px;font-size:14px;color:#bdbdbd">交互</div>
  <div class="abs" style="left:0;top:45px;width:288px;height:1px;background:#2e2e2e"></div>
  <div class="abs" style="left:18px;top:44px;width:76px;height:2px;background:#2a6fd6"></div>

  <div class="l" style="top:70px">名称:</div>
  <div class="in" style="left:95px;top:64px;width:175px;height:24px;line-height:22px;padding-left:11px">轨迹线</div>
  <div class="l" style="top:102px">自定义ID:</div>
  <div class="in" style="left:95px;top:96px;width:175px;height:24px;line-height:22px;padding-left:11px">09743804055</div>
  <div class="l" style="top:134px">自定义类型:</div>
  <div class="in" style="left:95px;top:128px;width:175px;height:24px"></div>
  <div class="abs" style="left:0;top:170px;width:288px;height:1px;background:#353535"></div>

  <div class="l" style="top:196px">线类型</div>
  <div class="in" style="left:95px;top:187px;width:175px;height:28px;line-height:24px">线标注</div>
  <svg style="left:247px;top:198px" width="12" height="8" viewBox="0 0 12 8"><path d="M1 1 L6 6.5 L11 1" fill="none" stroke="#9a9a9a" stroke-width="1.2"/></svg>
  <div class="l" style="top:228px">线样式</div>
  <div class="in" style="left:95px;top:218px;width:82px;height:29px;line-height:25px">纹理</div>
  <svg style="left:154px;top:230px" width="12" height="8" viewBox="0 0 12 8"><path d="M1 1 L6 6.5 L11 1" fill="none" stroke="#9a9a9a" stroke-width="1.2"/></svg>
  <div class="in" style="left:188px;top:217px;width:82px;height:24px"></div>
  <svg style="left:199px;top:219px" width="60" height="20" viewBox="0 0 60 20"><g fill="#f05a28"><path d="M0 0 L9 0 L20 10 L9 20 L0 20 L9 10Z"/><path d="M19 0 L28 0 L39 10 L28 20 L19 20 L28 10Z"/><path d="M38 0 L47 0 L60 10 L47 20 L38 20 L47 10Z"/></g></svg>
  <div class="l" style="top:260px">弧度</div>
  <svg style="left:43px;top:259px" width="13" height="13" viewBox="0 0 13 13"><circle cx="6.5" cy="6.5" r="5.3" fill="none" stroke="#6a6a6a" stroke-width="1"/><text x="6.5" y="9.6" text-anchor="middle" font-size="8.5" fill="#7a7a7a" font-family="Liberation Sans">?</text></svg>
  <div class="in" style="left:95px;top:253px;width:82px;height:24px"></div>
  <div class="abs" style="left:119px;top:254px;width:1px;height:22px;background:#2b2b2b"></div>
  <svg style="left:101px;top:258px" width="14" height="14" viewBox="0 0 14 14"><path d="M1.5 13 V8 Q1.5 1.5 8 1.5 H13" fill="none" stroke="#9a9a9a" stroke-width="1.2"/></svg>
  <div class="t" style="left:124px;top:260px;color:#e0e0e0">0</div>
  <div class="in" style="left:188px;top:253px;width:82px;height:24px"></div>
  <div class="abs" style="left:212px;top:254px;width:1px;height:22px;background:#2b2b2b"></div>
  <svg style="left:194px;top:258px" width="14" height="14" viewBox="0 0 14 14"><path d="M2.5 11.5 L11.5 2.5" stroke="#9a9a9a" stroke-width="1.2"/><circle cx="2.5" cy="11.5" r="1.5" fill="#111" stroke="#9a9a9a"/><circle cx="11.5" cy="2.5" r="1.5" fill="#111" stroke="#9a9a9a"/></svg>
  <div class="t" style="left:217px;top:260px;color:#e0e0e0">6</div>

  <div class="l" style="top:292px">离地高度</div>
  <div class="in" style="left:96px;top:285px;width:81px;height:24px;line-height:22px">0.12</div>
  <div class="l" style="top:324px">线宽</div>
  <div class="in" style="left:96px;top:317px;width:81px;height:24px;line-height:22px">1</div>
  <div class="l" style="top:356px">亮度</div>
  <div class="in" style="left:96px;top:349px;width:81px;height:24px;line-height:22px">0</div>
  <div class="l" style="top:388px">纹理流速</div>
  <div class="in" style="left:96px;top:381px;width:81px;height:24px;line-height:22px">1</div>
  <div class="l" style="top:420px">纹理平铺</div>
  <div class="in" style="left:96px;top:413px;width:81px;height:24px;line-height:22px">0.2</div>
  <div class="l" style="top:452px">渲染顺序</div>
  <div class="in" style="left:96px;top:445px;width:81px;height:24px;line-height:22px">76</div>
  <div class="l" style="top:484px">显示等级</div>
  <div class="t" style="left:96px;top:484px;color:#d8d8d8">8</div>
  <div class="abs" style="left:118px;top:487px;width:126px;height:4px;border-radius:2px;background:#2d2d2d"></div>
  <div class="abs" style="left:138px;top:487px;width:104px;height:4px;background:#1f76e0"></div>
  <div class="abs" style="left:135px;top:483px;width:6px;height:12px;border-radius:2px;background:#d5d7dc"></div>
  <div class="abs" style="left:238px;top:483px;width:6px;height:12px;border-radius:2px;background:#d5d7dc"></div>
  <div class="t" style="left:257px;top:484px;color:#d8d8d8">28</div>
  <div class="abs" style="left:0;top:519px;width:288px;height:1px;background:#353535"></div>
  <div class="abs" style="left:15px;top:534px;width:116px;height:32px;background:#1f7ce0;border-radius:2px"></div>
  <div class="t" style="left:31px;top:543px;font-size:14px;color:#d6e6fa">点集数据复制</div>

</div>

<!-- ================= TREE PANEL ================= -->
<div id="tree">

  <div class="t" style="left:0;top:11px;width:331px;text-align:center;font-size:13px;color:#a9a9a9">3D模型组件列表</div>
  <div class="abs" style="left:1px;top:37px;width:304px;height:22px;background:#0f0f0f"></div>
  <div class="t" style="left:12px;top:43px;font-size:11px;color:#6e6e6e">Search</div>
  <div class="abs" style="left:306px;top:37px;width:22px;height:22px;background:#2a2a2c;border:1px solid #4a4a4a"></div>
  <svg style="left:310px;top:41px" width="14" height="14" viewBox="0 0 14 14"><circle cx="5.8" cy="5.8" r="4.3" fill="none" stroke="#b0b0b0" stroke-width="1.3"/><path d="M9 9 L13 13" stroke="#b0b0b0" stroke-width="1.5"/></svg>
  <svg style="left:8px;top:86px" width="8" height="5" viewBox="0 0 8 5"><path d="M0 0 H8 L4 5Z" fill="#e6e6e6"/></svg>
  <div class="r" style="left:28px;top:82px">室外场景</div>
  <svg style="left:32px;top:114px" width="8" height="5" viewBox="0 0 8 5"><path d="M0 0 H8 L4 5Z" fill="#e6e6e6"/></svg>
  <div class="r" style="left:52px;top:110px">设备</div>
  <svg style="left:58px;top:137px" width="13" height="13" viewBox="0 0 13 13"><path d="M2.5 0.6 H12.4 V10.5" fill="none" stroke="#f0f0f0" stroke-width="1.2"/><rect x="0" y="2.6" width="10.4" height="10.4" rx="1" fill="#f4f4f4"/><path d="M2.6 5.2 H7.8 M5.2 5.2 V10.6" stroke="#303336" stroke-width="1.6" fill="none"/></svg>
  <div class="r" style="left:76px;top:138px">保安岗亭</div>
  <svg style="left:58px;top:165px" width="13" height="13" viewBox="0 0 13 13"><path d="M2.5 0.6 H12.4 V10.5" fill="none" stroke="#f0f0f0" stroke-width="1.2"/><rect x="0" y="2.6" width="10.4" height="10.4" rx="1" fill="#f4f4f4"/><path d="M2.6 5.2 H7.8 M5.2 5.2 V10.6" stroke="#303336" stroke-width="1.6" fill="none"/></svg>
  <div class="r" style="left:76px;top:166px">信号</div>
  <svg style="left:58px;top:193px" width="13" height="13" viewBox="0 0 13 13"><path d="M6.5 0.3 L12.4 3.4 V9.8 L6.5 12.8 L0.6 9.8 V3.4Z" fill="#f4f4f4"/><path d="M0.9 3.6 L6.5 6.6 L12.1 3.6 M6.5 6.6 V12.5" fill="none" stroke="#303336" stroke-width="1.1"/></svg>
  <div class="r" style="left:76px;top:194px">服务器</div>
  <svg style="left:58px;top:221px" width="13" height="13" viewBox="0 0 13 13"><path d="M6.5 0.3 L12.4 3.4 V9.8 L6.5 12.8 L0.6 9.8 V3.4Z" fill="#f4f4f4"/><path d="M0.9 3.6 L6.5 6.6 L12.1 3.6 M6.5 6.6 V12.5" fill="none" stroke="#303336" stroke-width="1.1"/></svg>
  <div class="r" style="left:76px;top:222px">监控摄像头</div>
  <svg style="left:58px;top:249px" width="13" height="13" viewBox="0 0 13 13"><path d="M6.5 0.3 L12.4 3.4 V9.8 L6.5 12.8 L0.6 9.8 V3.4Z" fill="#f4f4f4"/><path d="M0.9 3.6 L6.5 6.6 L12.1 3.6 M6.5 6.6 V12.5" fill="none" stroke="#303336" stroke-width="1.1"/></svg>
  <div class="r" style="left:76px;top:250px">消火栓</div>
  <svg style="left:32px;top:282px" width="8" height="5" viewBox="0 0 8 5"><path d="M0 0 H8 L4 5Z" fill="#e6e6e6"/></svg>
  <div class="r" style="left:52px;top:278px">警用监控</div>
  <svg style="left:58px;top:305px" width="13" height="13" viewBox="0 0 13 13"><path d="M2.5 0.6 H12.4 V10.5" fill="none" stroke="#f0f0f0" stroke-width="1.2"/><rect x="0" y="2.6" width="10.4" height="10.4" rx="1" fill="#f4f4f4"/><path d="M2.6 5.2 H7.8 M5.2 5.2 V10.6" stroke="#303336" stroke-width="1.6" fill="none"/></svg>
  <div class="r" style="left:76px;top:306px">警用-监控</div>
  <svg style="left:58px;top:333px" width="13" height="13" viewBox="0 0 13 13"><path d="M2.5 0.6 H12.4 V10.5" fill="none" stroke="#f0f0f0" stroke-width="1.2"/><rect x="0" y="2.6" width="10.4" height="10.4" rx="1" fill="#f4f4f4"/><path d="M2.6 5.2 H7.8 M5.2 5.2 V10.6" stroke="#303336" stroke-width="1.6" fill="none"/></svg>
  <div class="r" style="left:76px;top:334px">警用-监控</div>
  <svg style="left:58px;top:361px" width="13" height="13" viewBox="0 0 13 13"><path d="M2.5 0.6 H12.4 V10.5" fill="none" stroke="#f0f0f0" stroke-width="1.2"/><rect x="0" y="2.6" width="10.4" height="10.4" rx="1" fill="#f4f4f4"/><path d="M2.6 5.2 H7.8 M5.2 5.2 V10.6" stroke="#303336" stroke-width="1.6" fill="none"/></svg>
  <div class="r" style="left:76px;top:362px">警用-监控</div>

  <div class="abs" style="left:0;top:368px;width:331px;height:22px;background:#141414"></div>
  <div class="t" style="left:8px;top:373px;font-size:12px;color:#9a9a9a">元素数量：34</div>
  <svg style="left:310px;top:374px" width="12" height="12" viewBox="0 0 12 12"><circle cx="6" cy="6" r="5.2" fill="none" stroke="#8a8a8a" stroke-width="1"/><path d="M3.6 6 H8.4 M6 3.6 V8.4" stroke="#8a8a8a" stroke-width="1"/></svg>

</div>

</body>
</html>
